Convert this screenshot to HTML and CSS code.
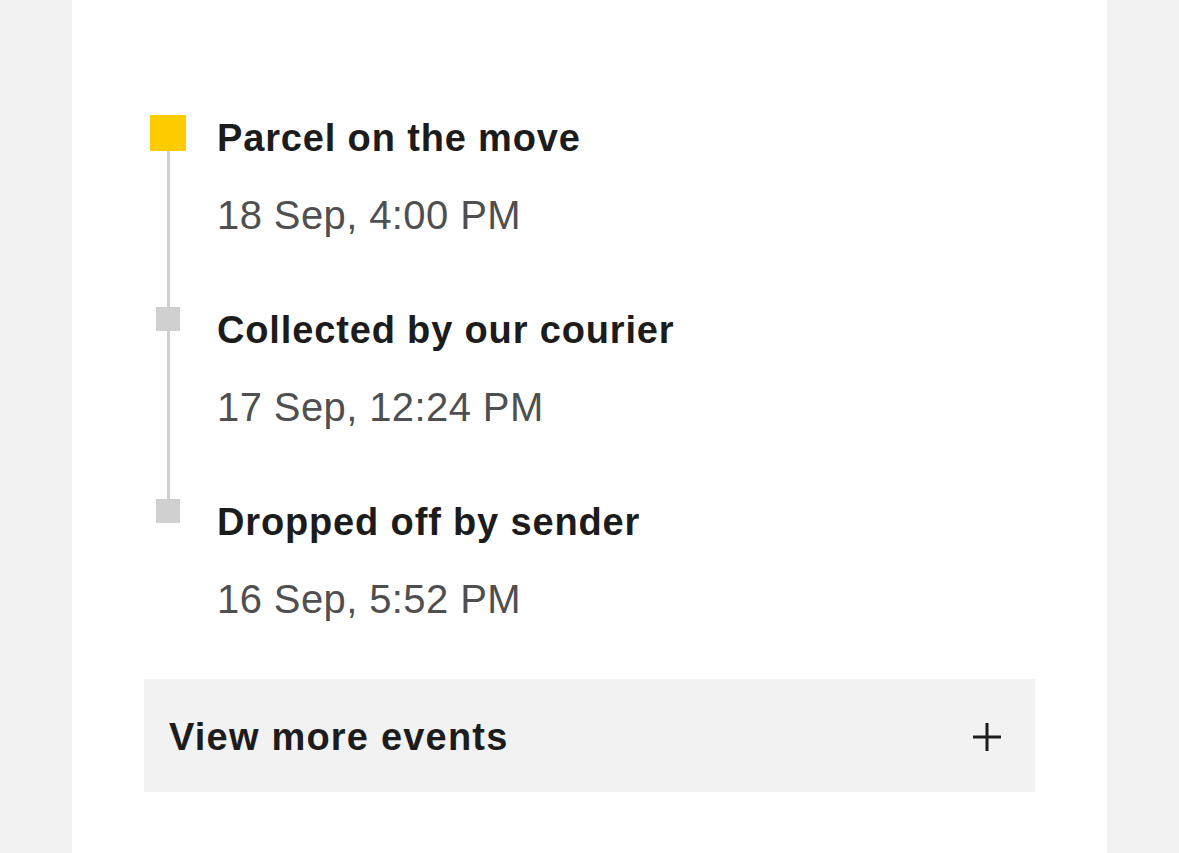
FILE: index.html
```html
<!DOCTYPE html>
<html lang="en">
<head>
<meta charset="utf-8">
<title>Tracking events</title>
<link rel="stylesheet" href="styles.css">
</head>
<body>
<main class="card">
  <ol class="timeline">
    <li class="event event-current">
      <div class="marker"><span class="dot"></span><span class="line"></span></div>
      <div class="event-body">
        <h3 class="event-title">Parcel on the move</h3>
        <p class="event-date">18 Sep, 4:00 PM</p>
      </div>
    </li>
    <li class="event">
      <div class="marker"><span class="dot"></span><span class="line"></span></div>
      <div class="event-body">
        <h3 class="event-title">Collected by our courier</h3>
        <p class="event-date">17 Sep, 12:24 PM</p>
      </div>
    </li>
    <li class="event event-last">
      <div class="marker"><span class="dot"></span></div>
      <div class="event-body">
        <h3 class="event-title">Dropped off by sender</h3>
        <p class="event-date">16 Sep, 5:52 PM</p>
      </div>
    </li>
  </ol>
  <button class="more" type="button">
    <span class="more-label">View more events</span>
    <svg class="more-icon" width="28" height="28" viewBox="0 0 28 28" aria-hidden="true">
      <path d="M14 0V28M0 14H28" stroke="#1c1c1c" stroke-width="3" fill="none"/>
    </svg>
  </button>
</main>
</body>
</html>
```

FILE: styles.css
```css
html, body {
  margin: 0;
  padding: 0;
}
body {
  background: #f2f2f2;
  font-family: "Liberation Sans", Arial, sans-serif;
  color: #1c1c1c;
}
.card {
  margin: 0 72px;
  min-height: 853px;
  box-sizing: border-box;
  background: #fff;
  padding: 115px 72px 40px;
}
.timeline {
  list-style: none;
  margin: 0;
  padding: 0;
}
.event {
  display: flex;
  gap: 25px;
  padding-bottom: 68px;
}
.event-last {
  padding-bottom: 56px;
}
.marker {
  width: 48px;
  flex: none;
  display: flex;
  flex-direction: column;
  align-items: center;
}
.dot {
  display: block;
  width: 24px;
  height: 24px;
  background: #d0d0d0;
  flex: none;
}
.event-current .dot {
  width: 36px;
  height: 36px;
  background: #ffcc00;
}
.line {
  display: block;
  width: 3px;
  flex: 1;
  background: #d0d0d0;
  margin-bottom: -68px;
}
.event-body {
  padding-top: 1px;
}
.event-title {
  margin: 0;
  font-size: 38px;
  line-height: 44px;
  font-weight: 700;
  letter-spacing: 0.85px;
  color: #1c1c1c;
}
.event-date {
  margin: 31px 0 0;
  font-size: 40px;
  line-height: 48px;
  font-weight: 400;
  letter-spacing: 0.4px;
  color: #4f4f4f;
}
.more {
  display: flex;
  align-items: center;
  justify-content: space-between;
  width: 100%;
  height: 113px;
  margin: 0;
  padding: 2px 34px 0 25px;
  box-sizing: border-box;
  border: 0;
  background: #f2f2f2;
  font-family: inherit;
  cursor: pointer;
}
.more-label {
  font-size: 38px;
  line-height: 44px;
  font-weight: 700;
  letter-spacing: 1.2px;
  color: #1c1c1c;
}
.more-icon {
  display: block;
  flex: none;
}
```
